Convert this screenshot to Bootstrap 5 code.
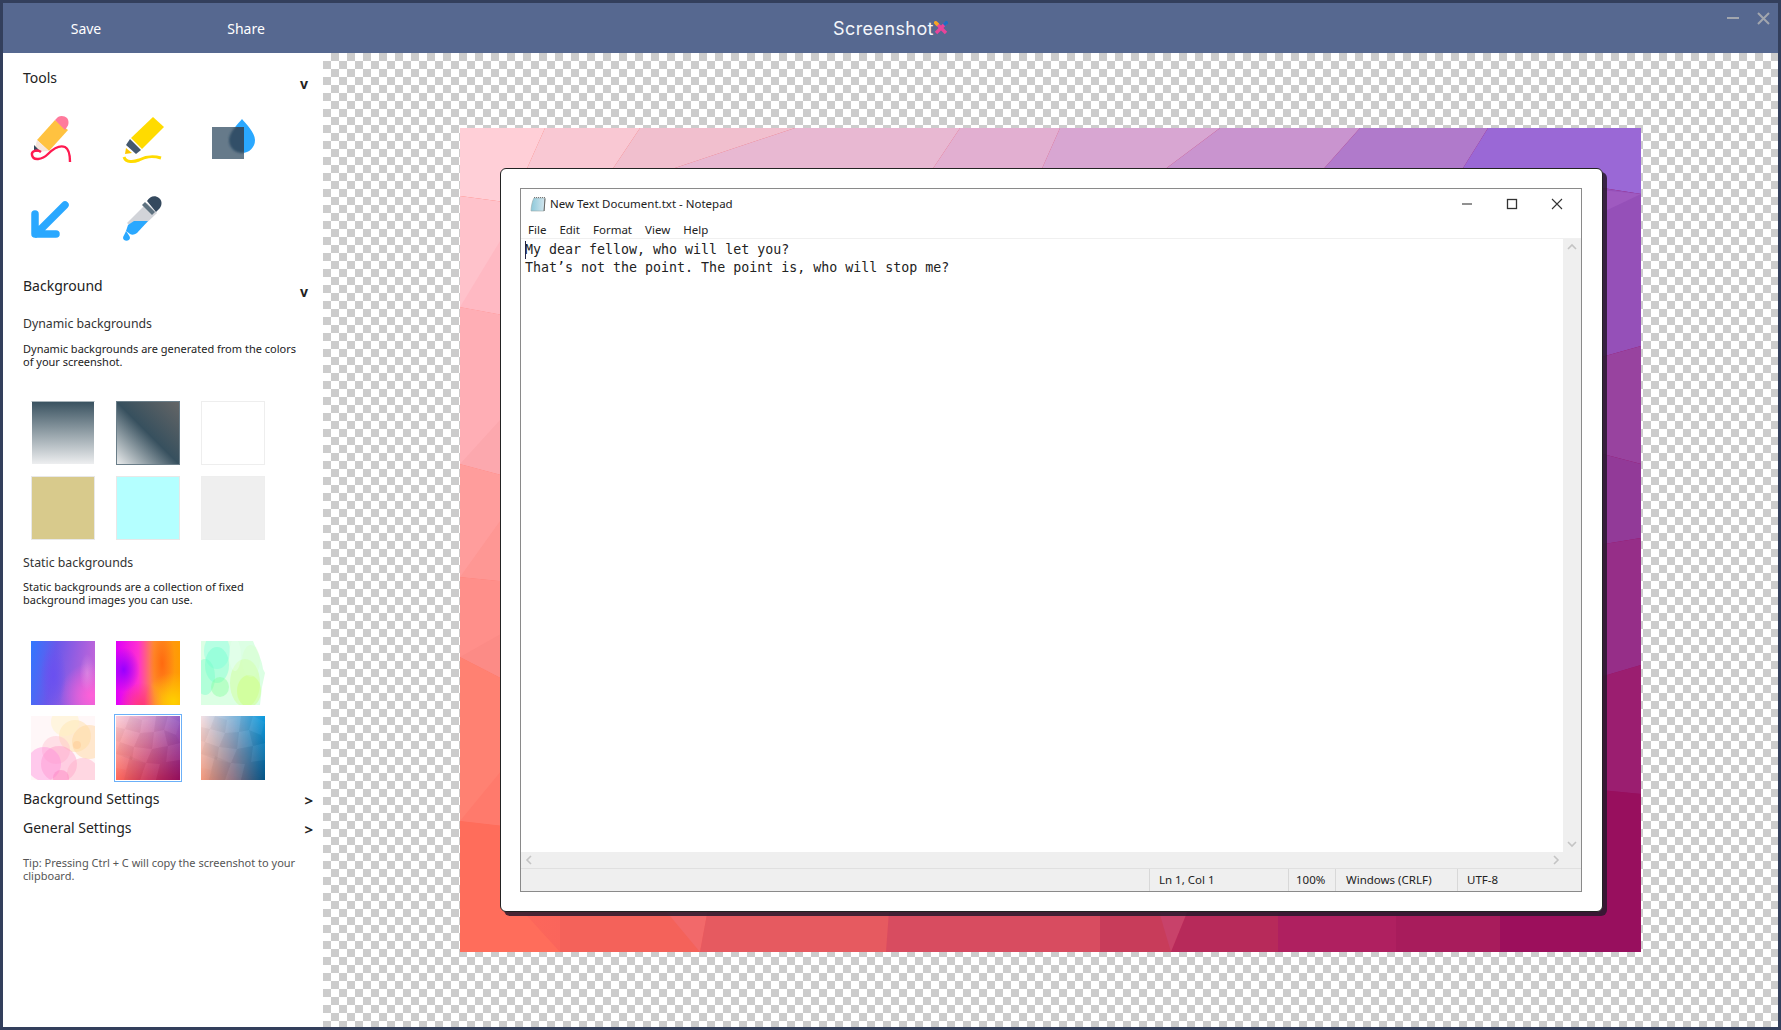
<!DOCTYPE html>
<html lang="en">
<head>
<meta charset="utf-8">
<title>ScreenshotX</title>
<link href="https://cdn.jsdelivr.net/npm/bootstrap@5.3.0/dist/css/bootstrap.min.css" rel="stylesheet">
<style>
html,body{height:100%;margin:0;overflow:hidden}
body{font-family:"Noto Sans","Open Sans",sans-serif;color:#222;background:#333f5c}
.app-shell{height:1030px;border:3px solid #333f5c}
.top-bar{height:50px;background:#566890;color:#fff;font-size:14px;flex:none}
.top-act{width:160px;text-align:center}
.top-left{margin-left:3px}
.brand-wrap{left:0;right:0;top:0;bottom:0;pointer-events:none}
.brand-name{font-family:Inter,"Open Sans",sans-serif;font-size:18px;letter-spacing:.4px;color:#f4f6fa}
.win-ctl{top:0;right:0}
.main-row{min-height:0}
.side-pane{width:320px;flex:0 0 320px;background:#fff;padding:0 0 0 20px}
.sec-head{font-size:14px;line-height:20px;color:#222;padding-right:15px}
.sec-head.closed{padding-right:10px}
.sec-mark{font-weight:700;font-size:14px;line-height:14px;color:#222;margin-top:9px}
.closed .sec-mark{margin-top:4px;font-size:15px}
.sub-head{font-size:12.3px;line-height:18px;color:#333}
.sub-note{font-size:11px;line-height:13px;color:#222;width:275px}
.tool-grid{display:grid;grid-template-columns:repeat(3,48px);column-gap:37px;row-gap:30px;margin:21px 0 0 4px}
.tool-grid svg{display:block;overflow:visible}
.swatch-grid{display:grid;grid-template-columns:repeat(3,64px);column-gap:21px;row-gap:11px;margin-left:8px}
.swatch-item{height:64px;width:64px;border:1px solid transparent;background-origin:border-box}
.swatch-item svg{display:block}
.plain-thumb{border:0}
.sw-a{background-image:linear-gradient(#37505e,#f0f1f2);border-color:#a8b4ba #fff #fff #fff}
.sw-b{background-image:linear-gradient(45deg,#f0f1f1 0,#37505e 50%,#666 100%);border-color:#6a7d88}
.sw-c{background:#fff;border-color:#eee}
.sw-d{background:#d8ca8c;border-color:#e8e8e8}
.sw-e{background:#b4ffff;border-color:#e8e8e8}
.sw-f{background:#efefef;border-color:#eee}
.sw-g{background:radial-gradient(ellipse 12% 30% at 88% 50%,#e8a0e880,transparent),radial-gradient(ellipse 20% 50% at 35% 55%,#6a50f0,transparent),radial-gradient(circle at 95% 85%,#ff60d8,transparent 40%),linear-gradient(100deg,#2f78ff 0,#6a58ea 35%,#9a5ee0 65%,#d068d8 100%)}
.sw-h{background:radial-gradient(ellipse 25% 35% at 12% 45%,#9800ff,transparent),radial-gradient(circle at 90% 95%,#ffd000,transparent 35%),radial-gradient(circle at 40% 100%,#ff3878,transparent 30%),radial-gradient(ellipse 20% 60% at 72% 35%,#ff6a10,transparent),linear-gradient(90deg,#e000f8 0,#ff30d0 35%,#ff9030 60%,#ff9c00 100%)}
.sw-k{outline:1.5px solid #6cb0f8;outline-offset:1.5px;position:relative}
.tip-note{font-size:11px;line-height:13px;color:#555;width:285px}
.stage-pane{flex:1 1 auto;min-width:0;background-color:#fff;background-image:conic-gradient(#ccc 25%,#fff 0 50%,#ccc 0 75%,#fff 0);background-size:16px 16px}
.poster{width:1181px;height:824px;position:relative;overflow:hidden;padding:40px 38px 0 40px;background:linear-gradient(90deg,#ff6a5a 0,#e84f60 45%,#a9165f 80%,#970e60 100%)}
.poster-mesh{position:absolute;inset:0;width:100%;height:100%}
.sheet{position:relative;height:744px;background:#fff;border:1px solid #222;border-radius:6px;box-shadow:4px 4px 0 rgba(40,25,45,.85);padding:19px 20px 19px 19px}
.note-win{height:100%;background:#fff;border:solid #8a8a8a;border-width:1.5px;display:flex;flex-direction:column;font-size:11.5px;color:#222}
.note-title{height:32px;padding:0 2px 2px 9px;flex:none}
.note-ctl-cell{width:45px}
.note-ctl-cell svg{display:block}
.note-menu{height:18px;padding-left:7px;gap:13px;border-bottom:1px solid #f0f0f0;flex:none}
.note-body{flex:1 1 auto;min-height:0}
.note-text{flex:1 1 auto;font-family:"DejaVu Sans Mono","Liberation Mono",monospace;font-size:13.3px;line-height:18px;padding:2px 0 0 4px;white-space:pre;color:#222;position:relative}
.caret-mark{position:absolute;left:4px;top:2px;width:1px;height:18px;background:#224}
.v-track{width:18px;background:#efefef}
.h-track{height:17px;background:#efefef;flex:none;border-bottom:1px solid #e0e0e0;padding:0 21px 0 4px}
.stat-bar{height:22px;background:#efefef;flex:none}
.stat-gap{width:628px}
.stat-cell{border-left:1px solid #d8d8d8;padding-left:9px;height:100%}
.w-a{width:139px}.w-b{width:47px;padding-left:7px}.w-c{width:122px;padding-left:10px}.w-d{flex:1 1 auto}
.mt-tools{margin-top:15px}
.mt-bg{margin-top:30px}
.mt-dyn{margin-top:16px}
.mt-note1{margin-top:9px}
.mt-sw1{margin-top:33px}
.mt-stat{margin-top:14px}
.mt-note2{margin-top:8px}
.mt-sw2{margin-top:35px}
.mt-s1{margin-top:9px}
.mt-s2{margin-top:9px}
.mt-tip{margin-top:18px}
.note-name{margin-left:3px}
</style>
</head>
<body>
<svg width="0" height="0" class="position-absolute" aria-hidden="true">
  <defs>
    <linearGradient id="vFade" x1="0" y1="0" x2="0" y2="1"><stop offset="0" stop-color="#fff"/><stop offset="1" stop-color="#000"/></linearGradient>
    <mask id="vMask"><rect width="64" height="64" fill="url(#vFade)"/></mask>
    <linearGradient id="kBot"><stop offset="0" stop-color="#ff6a5a"/><stop offset=".5" stop-color="#c8345c"/><stop offset="1" stop-color="#980e5e"/></linearGradient>
    <linearGradient id="kTop"><stop offset="0" stop-color="#fbd2da"/><stop offset=".5" stop-color="#d8a0cc"/><stop offset="1" stop-color="#9462c8"/></linearGradient>
    <linearGradient id="lBot"><stop offset="0" stop-color="#f49a7c"/><stop offset=".5" stop-color="#8a7080"/><stop offset="1" stop-color="#04568a"/></linearGradient>
    <linearGradient id="lTop"><stop offset="0" stop-color="#f4e0e4"/><stop offset=".5" stop-color="#88b8dc"/><stop offset="1" stop-color="#0a9ade"/></linearGradient>
    <g id="facetSet">
      <g fill="#fff" fill-opacity=".045">
        <polygon points="0,0 14,0 9,13 0,11"/><polygon points="26,4 40,0 38,16 24,17"/><polygon points="52,0 64,6 60,19 48,14"/>
        <polygon points="9,13 24,17 18,31 4,26"/><polygon points="38,16 48,14 52,30 36,33"/><polygon points="0,38 14,40 10,54 0,52"/>
        <polygon points="18,31 36,33 30,47 16,44"/><polygon points="52,30 64,27 64,44 50,46"/><polygon points="30,47 44,48 40,64 24,64"/>
      </g>
      <g fill="#000" fill-opacity=".03">
        <polygon points="14,0 26,4 24,17 9,13"/><polygon points="40,0 52,0 48,14 38,16"/><polygon points="0,11 9,13 4,26 0,25"/>
        <polygon points="24,17 38,16 36,33 18,31"/><polygon points="48,14 60,19 64,27 52,30"/><polygon points="4,26 18,31 16,44 0,38"/>
        <polygon points="36,33 52,30 50,46 44,48 30,47"/><polygon points="14,40 30,47 24,64 8,64"/><polygon points="44,48 50,46 64,44 64,64 40,64"/>
      </g>
    </g>
  </defs>
</svg>
<div class="app-shell d-flex flex-column">
  <header class="top-bar d-flex align-items-center position-relative">
    <div class="d-flex top-left">
      <div class="top-act">Save</div>
      <div class="top-act">Share</div>
    </div>
    <div class="brand-wrap position-absolute d-flex align-items-center justify-content-center">
      <span class="brand-name">Screenshot</span>
      <svg width="14" height="14" viewBox="0 0 14 14" aria-hidden="true"><path d="M2 2l10 10" stroke="#e8449a" stroke-width="3.4"/><path d="M12 2L2 12" stroke="#e8449a" stroke-width="3.4"/><path d="M.5 .5L4 4" stroke="#f5a623" stroke-width="3.4"/><path d="M13.5 .5L10 4" stroke="#1a6fc0" stroke-width="3.4"/></svg>
    </div>
    <div class="win-ctl position-absolute d-flex">
      <svg width="60" height="26" viewBox="0 0 60 26" aria-hidden="true"><path d="M9 15h12" stroke="#a2a6ae" stroke-width="2"/><path d="M40 10l11 11M51 10L40 21" stroke="#a2a6ae" stroke-width="2"/></svg>
    </div>
  </header>
  <div class="main-row d-flex flex-grow-1">
    <aside class="side-pane">
      <div class="sec-head d-flex justify-content-between mt-tools"><span>Tools</span><span class="sec-mark">v</span></div>
      <div class="tool-grid">
        <svg width="48" height="52" viewBox="27 112 48 52" aria-hidden="true">
          <path d="M37 140l18-20 13 10-19 21z" fill="#ffc240"/>
          <path d="M55 120l3-3c3-2 7-1 9 1s2 7 0 9l-2 3z" fill="#ff7a9c"/>
          <path d="M37 140l12 11-15 1z" fill="#f6e6dc"/>
          <path d="M34 145l6 6-6 1z" fill="#34495e"/>
          <path d="M41 152c-4-3-10-1-9 3 1 6 10 5 16-1 6-6 12-9 17-7 4 2 5 7 5 15" fill="none" stroke="#ff1a50" stroke-width="2.400"/>
        </svg>
        <svg width="48" height="52" viewBox="112 112 48 52" aria-hidden="true">
          <path d="M153 117l11 10-22 22-11-11z" fill="#ffdb00"/>
          <path d="M130 139l11 11-5 4-10-9z" fill="#44586e"/>
          <path d="M126 148l6 5-7 1z" fill="#ffc800"/>
          <path d="M124 157c2 6 10 5 15 3 6-3 12-5 22-2" fill="none" stroke="#ffdb00" stroke-width="3"/>
        </svg>
        <svg width="48" height="52" viewBox="197 112 48 52" aria-hidden="true">
          <defs><filter id="softEdge"><feGaussianBlur stdDeviation=".8"/></filter><clipPath id="rectClip"><rect x="212" y="127" width="32" height="32"/></clipPath></defs>
          <path d="M242 119c3 4 13 13 13 21a13 13 0 0 1-26 0c0-8 10-17 13-21z" fill="#2aa8ff"/>
          <rect x="212" y="127" width="32" height="32" fill="#667a8a"/>
          <g clip-path="url(#rectClip)"><path d="M242 119c3 4 13 13 13 21a13 13 0 0 1-26 0c0-8 10-17 13-21z" fill="#324f68" filter="url(#softEdge)"/></g>
        </svg>
        <svg width="48" height="52" viewBox="27 195 48 52" aria-hidden="true">
          <path d="M65 206L36 235M35 215v20h21" fill="none" stroke="#2aa8ff" stroke-width="7.500" stroke-linecap="round" stroke-linejoin="round"/>
        </svg>
        <svg width="48" height="52" viewBox="112 195 48 52" aria-hidden="true">
          <path d="M127 224l20-20 10 10-20 19z" fill="#d2d4d9"/>
          <path d="M128 226l6-4h14l-11 12c-3 2-5 2-7 1l-4-3z" fill="#2aa8ff"/>
          <path d="M145 203l10 10-3 3-10-10z" fill="#5e7280"/>
          <path d="M147 202c3-5 8-6 12-3s3 9-1 12l-2 2z" fill="#34495e"/>
          <path d="M126 232c2 3 4 5 4 7a3.600 3.600 0 0 1-7 0c0-2 2-4 3-7z" fill="#2aa8ff"/>
        </svg>
      </div>
      <div class="sec-head d-flex justify-content-between mt-bg"><span>Background</span><span class="sec-mark">v</span></div>
      <div class="sub-head mt-dyn">Dynamic backgrounds</div>
      <div class="sub-note mt-note1">Dynamic backgrounds are generated from the colors of your screenshot.</div>
      <div class="swatch-grid mt-sw1">
        <div class="swatch-item sw-a"></div><div class="swatch-item sw-b"></div><div class="swatch-item sw-c"></div>
        <div class="swatch-item sw-d"></div><div class="swatch-item sw-e"></div><div class="swatch-item sw-f"></div>
      </div>
      <div class="sub-head mt-stat">Static backgrounds</div>
      <div class="sub-note mt-note2">Static backgrounds are a collection of fixed background images you can use.</div>
      <div class="swatch-grid mt-sw2">
        <div class="swatch-item plain-thumb sw-g"></div>
        <div class="swatch-item plain-thumb sw-h"></div>
        <div class="swatch-item plain-thumb">
          <svg width="64" height="64" viewBox="0 0 64 64" aria-hidden="true">
            <path d="M0 0h52c3 8 9 18 10 28l2 4-3 14-2 18H0z" fill="#dcffe4"/>
            <g fill-opacity=".4"><ellipse cx="16" cy="10" rx="13" ry="18" fill="#7effe0"/><ellipse cx="16" cy="24" rx="12" ry="18" fill="#6effd0"/><ellipse cx="4" cy="36" rx="10" ry="18" fill="#70ffc8"/><ellipse cx="19" cy="46" rx="9" ry="10" fill="#80ff98"/><ellipse cx="44" cy="42" rx="15" ry="24" fill="#ccff88"/><ellipse cx="48" cy="50" rx="12" ry="16" fill="#ccff70"/><ellipse cx="50" cy="20" rx="9" ry="16" fill="#d8ffc8"/><ellipse cx="34" cy="14" rx="6" ry="16" fill="#e8fff0"/></g>
          </svg>
        </div>
        <div class="swatch-item plain-thumb">
          <svg width="64" height="64" viewBox="0 0 64 64" aria-hidden="true">
            <rect width="64" height="64" fill="#fff7f8"/>
            <g fill-opacity=".45"><circle cx="58" cy="26" r="17" fill="#ffd29a"/><circle cx="44" cy="20" r="16" fill="#ffdca0"/><circle cx="34" cy="6" r="14" fill="#fff2c0"/><circle cx="46" cy="29" r="4" fill="#ffc890"/><circle cx="25" cy="34" r="14" fill="#ffc0d0"/><circle cx="28" cy="48" r="18" fill="#ff9cc8"/><circle cx="13" cy="48" r="17" fill="#ff90dd"/><circle cx="52" cy="58" r="16" fill="#ffb0c8"/><circle cx="30" cy="62" r="8" fill="#ff80c0"/></g>
          </svg>
        </div>
        <div class="swatch-item plain-thumb sw-k">
          <svg width="64" height="64" viewBox="0 0 64 64" aria-hidden="true">
            <rect width="64" height="64" fill="url(#kBot)"/><rect width="64" height="64" fill="url(#kTop)" mask="url(#vMask)"/><use href="#facetSet"/>
          </svg>
        </div>
        <div class="swatch-item plain-thumb">
          <svg width="64" height="64" viewBox="0 0 64 64" aria-hidden="true">
            <rect width="64" height="64" fill="url(#lBot)"/><rect width="64" height="64" fill="url(#lTop)" mask="url(#vMask)"/><use href="#facetSet"/>
          </svg>
        </div>
      </div>
      <div class="sec-head closed d-flex justify-content-between mt-s1"><span>Background Settings</span><span class="sec-mark">&gt;</span></div>
      <div class="sec-head closed d-flex justify-content-between mt-s2"><span>General Settings</span><span class="sec-mark">&gt;</span></div>
      <div class="tip-note mt-tip">Tip: Pressing Ctrl + C will copy the screenshot to your clipboard.</div>
    </aside>
    <main class="stage-pane d-flex align-items-center justify-content-center">
      <div class="poster">
        <svg class="poster-mesh" viewBox="0 0 1181 824" preserveAspectRatio="none" aria-hidden="true">
          <polygon points="0,0 60,0 60,76 0,68" fill="#ffcfd7"/>
          <polygon points="0,68 60,76 60,190 0,179" fill="#ffc2cb"/>
          <polygon points="0,179 60,80 60,190" fill="#ffb9c3"/>
          <polygon points="0,179 60,190 60,352 0,336" fill="#ffaeb5"/>
          <polygon points="0,336 60,270 60,352" fill="#fca8ae"/>
          <polygon points="0,336 60,352 60,455 0,449" fill="#ff9d9c"/>
          <polygon points="0,449 60,365 60,455" fill="#fe9794"/>
          <polygon points="0,449 60,455 60,560 0,529" fill="#ff8f8a"/>
          <polygon points="0,529 60,495 60,560" fill="#fc8b86"/>
          <polygon points="0,529 60,560 60,700 0,693" fill="#ff8172"/>
          <polygon points="0,693 60,620 60,700" fill="#ff7a6c"/>
          <polygon points="0,693 60,700 60,780 100,824 0,824" fill="#ff6d5b"/>
          <polygon points="60,0 85,0 65,45 60,45" fill="#ffcfd7"/>
          <polygon points="85,0 180,0 150,45 65,45" fill="#f9c8d3"/>
          <polygon points="180,0 335,0 200,45 150,45" fill="#f1bfce"/>
          <polygon points="335,0 500,0 470,45 200,45" fill="#e8b8d2"/>
          <polygon points="500,0 600,0 580,45 470,45" fill="#e2afd1"/>
          <polygon points="600,0 760,0 700,45 580,45" fill="#d8a6d2"/>
          <polygon points="760,0 900,0 860,45 700,45" fill="#c994cf"/>
          <polygon points="900,0 1028,0 1000,45 860,45" fill="#b07acb"/>
          <polygon points="1028,0 1181,0 1181,66 1143,60 1120,45 1000,45" fill="#9a68d6"/>
          <polygon points="1120,45 1143,60 1181,66 1181,218 1120,235" fill="#9550b8"/>
          <polygon points="1120,95 1181,66 1120,60" fill="#9f5ac0"/>
          <polygon points="1120,235 1181,218 1181,336 1120,320" fill="#98439f"/>
          <polygon points="1120,320 1181,336 1181,410 1120,420" fill="#923a98"/>
          <polygon points="1120,420 1181,410 1181,537 1120,555" fill="#962e88"/>
          <polygon points="1120,555 1181,537 1181,666 1120,660" fill="#9b1e70"/>
          <polygon points="1120,660 1181,666 1181,824 1120,824" fill="#980f5e"/>
          <polygon points="100,770 240,770 240,824 100,824" fill="#f4625a"/>
          <polygon points="195,770 250,770 240,824" fill="#f2696a"/>
          <polygon points="250,770 430,770 426,824 240,824" fill="#e65a60"/>
          <polygon points="430,770 640,770 640,824 426,824" fill="#d84c60"/>
          <polygon points="640,770 700,770 711,824 640,824" fill="#c83c5a"/>
          <polygon points="695,770 733,770 711,824" fill="#c8426a"/>
          <polygon points="733,770 818,770 818,824 711,824" fill="#b72a5a"/>
          <polygon points="818,770 936,770 936,824 818,824" fill="#af2060"/>
          <polygon points="936,770 1040,770 1040,824 936,824" fill="#a81c5c"/>
          <polygon points="1040,770 1120,770 1120,824 1040,824" fill="#9c0f5c"/>
        </svg>
        <div class="sheet">
          <div class="note-win">
            <div class="note-title d-flex align-items-center">
              <svg width="17" height="16" viewBox="0 0 17 16" aria-hidden="true"><defs><linearGradient id="padFill"><stop offset="0" stop-color="#8cc8da"/><stop offset="1" stop-color="#d4e6ee"/></linearGradient></defs><path d="M4 2h11l-1 13H1c0-3 1-10 3-13z" fill="url(#padFill)" stroke="#9aa" stroke-width=".6"/><path d="M4 1.500h11" stroke="#777" stroke-dasharray="1 1"/><path d="M15 2.500l-.9 12.500" stroke="#666"/></svg>
              <span class="note-name">New Text Document.txt - Notepad</span>
              <div class="d-flex ms-auto align-items-center">
                <div class="note-ctl-cell d-flex justify-content-center"><svg width="12" height="12" viewBox="0 0 12 12" aria-hidden="true"><path d="M1 6h10" stroke="#555" stroke-width="1.300"/></svg></div>
                <div class="note-ctl-cell d-flex justify-content-center"><svg width="12" height="12" viewBox="0 0 12 12" aria-hidden="true"><rect x="1.500" y="1.500" width="9" height="9" fill="none" stroke="#333" stroke-width="1.300"/></svg></div>
                <div class="note-ctl-cell d-flex justify-content-center"><svg width="12" height="12" viewBox="0 0 12 12" aria-hidden="true"><path d="M1 1l10 10M11 1L1 11" stroke="#333" stroke-width="1.100"/></svg></div>
              </div>
            </div>
            <div class="note-menu d-flex align-items-center"><span>File</span><span>Edit</span><span>Format</span><span>View</span><span>Help</span></div>
            <div class="note-body d-flex">
              <div class="note-text"><span class="caret-mark"></span>My dear fellow, who will let you?
That’s not the point. The point is, who will stop me?</div>
              <div class="v-track d-flex flex-column justify-content-between align-items-center py-1">
                <svg width="10" height="8" viewBox="0 0 10 8" aria-hidden="true"><path d="M1 6l4-4 4 4" fill="none" stroke="#c4c4c4" stroke-width="1.600"/></svg>
                <svg width="10" height="8" viewBox="0 0 10 8" aria-hidden="true"><path d="M1 2l4 4 4-4" fill="none" stroke="#c4c4c4" stroke-width="1.600"/></svg>
              </div>
            </div>
            <div class="h-track d-flex align-items-center justify-content-between">
              <svg width="8" height="10" viewBox="0 0 8 10" aria-hidden="true"><path d="M6 1L2 5l4 4" fill="none" stroke="#c4c4c4" stroke-width="1.600"/></svg>
              <svg width="8" height="10" viewBox="0 0 8 10" aria-hidden="true"><path d="M2 1l4 4-4 4" fill="none" stroke="#c4c4c4" stroke-width="1.600"/></svg>
            </div>
            <div class="stat-bar d-flex">
              <div class="stat-gap"></div>
              <div class="stat-cell w-a d-flex align-items-center">Ln 1, Col 1</div>
              <div class="stat-cell w-b d-flex align-items-center">100%</div>
              <div class="stat-cell w-c d-flex align-items-center">Windows (CRLF)</div>
              <div class="stat-cell w-d d-flex align-items-center">UTF-8</div>
            </div>
          </div>
        </div>
      </div>
    </main>
  </div>
</div>
<script src="https://cdn.jsdelivr.net/npm/bootstrap@5.3.0/dist/js/bootstrap.bundle.min.js"></script>
</body>
</html>
